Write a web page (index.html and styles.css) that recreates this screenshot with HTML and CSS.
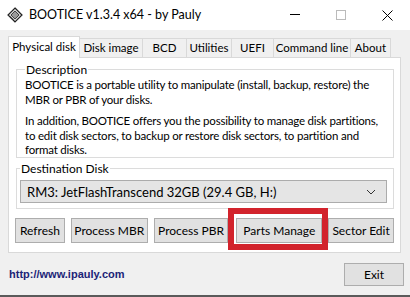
FILE: index.html
```html
<!DOCTYPE html>
<html lang="en">
<head>
    <meta charset="UTF-8">
    <meta name="viewport" content="width=device-width, initial-scale=1.0">
    <title>BOOTICE v1.3.4 x64 - by Pauly</title>
    <link rel="stylesheet" href="styles.css">
</head>
<body>
    <div class="window">
        <div class="titlebar">
            <svg class="app-icon" width="16" height="16" viewBox="0 0 16 16">
                <path d="M8 1 L15 8 L8 15 L1 8 Z" fill="#d8d8d8" stroke="#222" stroke-width="1.2"/>
                <path d="M4 8 L8 4 L12 8 L8 12 Z" fill="#9a9a9a" stroke="#222" stroke-width="0.8"/>
                <path d="M3 10 L6 13 M2.5 9 L7 13.5" stroke="#222" stroke-width="0.8"/>
            </svg>
            <span class="title">BOOTICE v1.3.4 x64 - by Pauly</span>
            <div class="caption-buttons">
                <span class="cap cap-min"><svg width="10" height="10" viewBox="0 0 10 10"><path d="M0 5.5 H10" stroke="#000" stroke-width="1"/></svg></span>
                <span class="cap cap-max"><svg width="10" height="10" viewBox="0 0 10 10"><rect x="0.5" y="0.5" width="9" height="9" fill="none" stroke="#bbb" stroke-width="1"/></svg></span>
                <span class="cap cap-close"><svg width="11" height="11" viewBox="0 0 11 11"><path d="M0.5 0.5 L10.5 10.5 M10.5 0.5 L0.5 10.5" stroke="#000" stroke-width="1"/></svg></span>
            </div>
        </div>
        <div class="main">
            <div class="tabs">
                <div class="tab active">Physical disk</div>
                <div class="tab t-image">Disk image</div>
                <div class="tab t-bcd">BCD</div>
                <div class="tab t-util">Utilities</div>
                <div class="tab t-uefi">UEFI</div>
                <div class="tab t-cmd">Command line</div>
                <div class="tab t-about">About</div>
            </div>
            <div class="panel">
                <fieldset class="group description">
                    <legend>Description</legend>
                    <p>BOOTICE is a portable utility to manipulate (install, backup, restore) the<br>MBR or PBR of your disks.</p>
                    <p>In addition, BOOTICE offers you the possibility to manage disk partitions,<br>to edit disk sectors, to backup or restore disk sectors, to partition and<br>format disks.</p>
                </fieldset>
                <fieldset class="group destination">
                    <legend>Destination Disk</legend>
                    <div class="combo">
                        <span>RM3: JetFlashTranscend 32GB (29.4 GB, H:)</span>
                        <svg width="10" height="6" viewBox="0 0 10 6"><path d="M1 1 L5 5 L9 1" fill="none" stroke="#333" stroke-width="1"/></svg>
                    </div>
                </fieldset>
                <div class="actions">
                    <button class="btn btn-refresh">Refresh</button>
                    <button class="btn btn-mbr">Process MBR</button>
                    <button class="btn btn-pbr">Process PBR</button>
                    <button class="btn btn-parts highlight">Parts Manage</button>
                    <button class="btn btn-sector">Sector Edit</button>
                </div>
            </div>
            <div class="footer">
                <a class="site-link" href="#">http://www.ipauly.com</a>
                <button class="btn btn-exit">Exit</button>
            </div>
        </div>
    </div>
</body>
</html>
```

FILE: styles.css
```css
body {
    margin: 0;
    padding: 0;
    font-family: Lato, "Liberation Sans", sans-serif;
    font-size: 12px;
    color: #000;
    background-color: #f0f0f0;
}
.window {
    width: 410px;
    height: 297px;
    overflow: hidden;
    background-color: #f0f0f0;
    border-bottom: 2px solid #5a5a5a;
    box-sizing: border-box;
}
.titlebar {
    height: 30px;
    background-color: #fff;
    display: flex;
    align-items: center;
}
.app-icon {
    margin-left: 7px;
    margin-right: 6px;
    margin-top: -1px;
}
.title {
    font-size: 12.5px;
    margin-top: -2px;
}
.caption-buttons {
    margin-left: auto;
    display: flex;
    height: 30px;
}
.cap {
    width: 46px;
    display: flex;
    align-items: center;
    justify-content: center;
}
.cap-min {
    margin-top: -2px;
}
.main {
    padding: 6px 9px 0 8px;
}
.tabs {
    display: flex;
    align-items: flex-end;
    height: 21px;
}
.tab {
    height: 19px;
    line-height: 18px;
    border: 1px solid #d9d9d9;
    border-bottom: none;
    border-left: none;
    box-sizing: border-box;
    background-color: #f0f0f0;
    text-align: center;
    white-space: nowrap;
    font-size: 11.5px;
}
.tab.active {
    width: 72px;
    height: 22px;
    line-height: 20px;
    background-color: #fff;
    border-left: 1px solid #d9d9d9;
    position: relative;
    top: 1px;
}
.t-image { width: 63px; }
.t-bcd { width: 44px; }
.t-util { width: 45px; }
.t-uefi { width: 42px; }
.t-cmd { width: 77px; }
.t-about { width: 40px; }
.panel {
    background-color: #fff;
    border: 1px solid #d9d9d9;
    height: 196px;
    box-sizing: border-box;
    padding: 4px 6px 0 7px;
}
.group {
    border: 1px solid #dcdcdc;
    margin: 0;
    padding: 0 8px;
}
.group legend {
    padding: 0 1px;
    margin-left: 0;
    line-height: 15px;
}
.description {
    height: 96px;
    box-sizing: border-box;
    padding-top: 1px;
    white-space: nowrap;
    font-size: 11.5px;
    letter-spacing: -0.2px;
}
.description legend {
    font-size: 12px;
    letter-spacing: 0;
}
.description p {
    margin: 0 0 7px 0;
    line-height: 14.5px;
}
.destination {
    margin-top: 3px;
    height: 48px;
    box-sizing: border-box;
    padding: 4px 6px 0 3px;
}
.combo {
    height: 23px;
    border: 1px solid #acacac;
    background-color: #e5e5e5;
    box-sizing: border-box;
    display: flex;
    align-items: center;
    justify-content: space-between;
    padding: 0 10px 0 6px;
    font-size: 13px;
}
.actions {
    display: flex;
    gap: 6px;
    margin-top: 9px;
    margin-left: -1px;
}
.btn {
    height: 25px;
    border: 1px solid #adadad;
    background-color: #e1e1e1;
    font-family: Lato, "Liberation Sans", sans-serif;
    font-size: 12px;
    padding: 0;
    color: #000;
}
.btn-refresh { width: 50px; }
.btn-mbr { width: 77px; }
.btn-pbr { width: 75px; }
.btn-parts { width: 86px; margin-left: 2px; }
.btn-sector { width: 66px; }
.highlight {
    position: relative;
}
.highlight::after {
    content: "";
    position: absolute;
    top: -11px;
    left: -9px;
    right: -7px;
    bottom: -8px;
    border: 6px solid #d2232c;
}
.footer {
    display: flex;
    align-items: center;
    justify-content: space-between;
    height: 40px;
    padding-top: 1px;
}
.site-link {
    font-family: "Liberation Sans", Arial, sans-serif;
    font-weight: bold;
    font-size: 11px;
    color: #1b2477;
    text-decoration: none;
    margin-left: 1px;
}
.btn-exit {
    width: 60px;
    height: 23px;
    margin-right: -3px;
}
```
